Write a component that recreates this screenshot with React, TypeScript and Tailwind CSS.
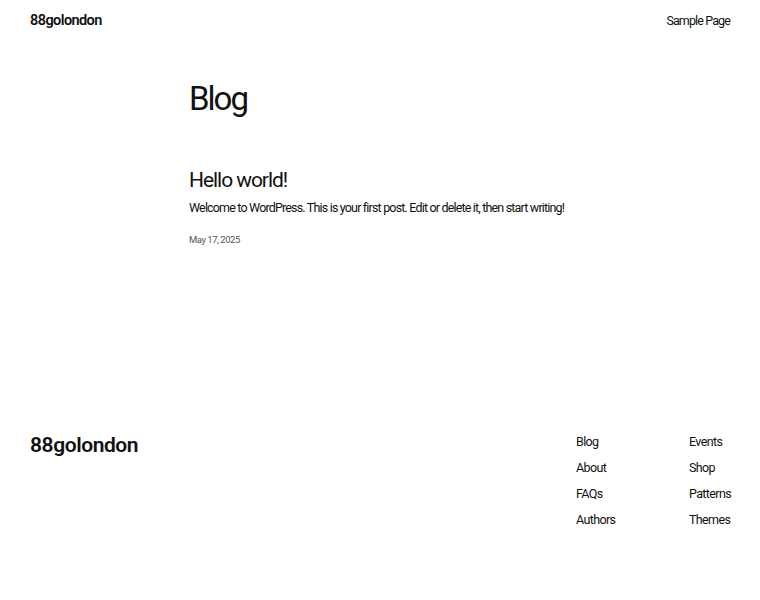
const footerCols = [
  ["Blog", "About", "FAQs", "Authors"],
  ["Events", "Shop", "Patterns", "Themes"],
];

export default function App() {
  return (
    <div
      className="min-h-[600px] bg-white text-[#111111]"
      style={{ fontFamily: "Roboto, Inter, 'Noto Sans', sans-serif" }}
    >
      <header className="flex items-center justify-between px-[30px] pt-[11px]">
        <a className="text-[14.5px] font-semibold tracking-[-0.04em] leading-[20px]" href="#">
          88golondon
        </a>
        <nav className="text-[12.5px] tracking-[-0.07em] leading-[20px]">
          <a href="#">Sample Page</a>
        </nav>
      </header>

      <main className="ml-[189px] w-[382px]">
        <h1 className="mt-[48px] text-[33px] font-normal tracking-[-0.06em] leading-[40px]">Blog</h1>
        <article className="mt-[48px]">
          <h2 className="text-[21px] font-normal tracking-[-0.05em] leading-[26px]">
            <a href="#">Hello world!</a>
          </h2>
          <p className="mt-[6px] whitespace-nowrap text-[12.5px] tracking-[-0.066em] leading-[18px]">
            Welcome to WordPress. This is your first post. Edit or delete it, then start writing!
          </p>
          <p className="mt-[16px] text-[9.5px] tracking-[-0.05em] text-[#555555] leading-[14px]">May 17, 2025</p>
        </article>
      </main>

      <footer className="mt-[185px] flex items-start justify-between pl-[30px] pr-[29px]">
        <a className="text-[21px] font-semibold tracking-[-0.02em] leading-[26px]" href="#">
          88golondon
        </a>
        <div className="flex pt-[1px]">
          {footerCols.map((col, i) => (
            <ul key={i} className={i === 0 ? "w-[113px]" : "w-[42px]"}>
              {col.map((item) => (
                <li key={item} className="h-[26px] text-[12.5px] tracking-[-0.05em] leading-[18px] whitespace-nowrap">
                  <a href="#">{item}</a>
                </li>
              ))}
            </ul>
          ))}
        </div>
      </footer>
    </div>
  );
}
